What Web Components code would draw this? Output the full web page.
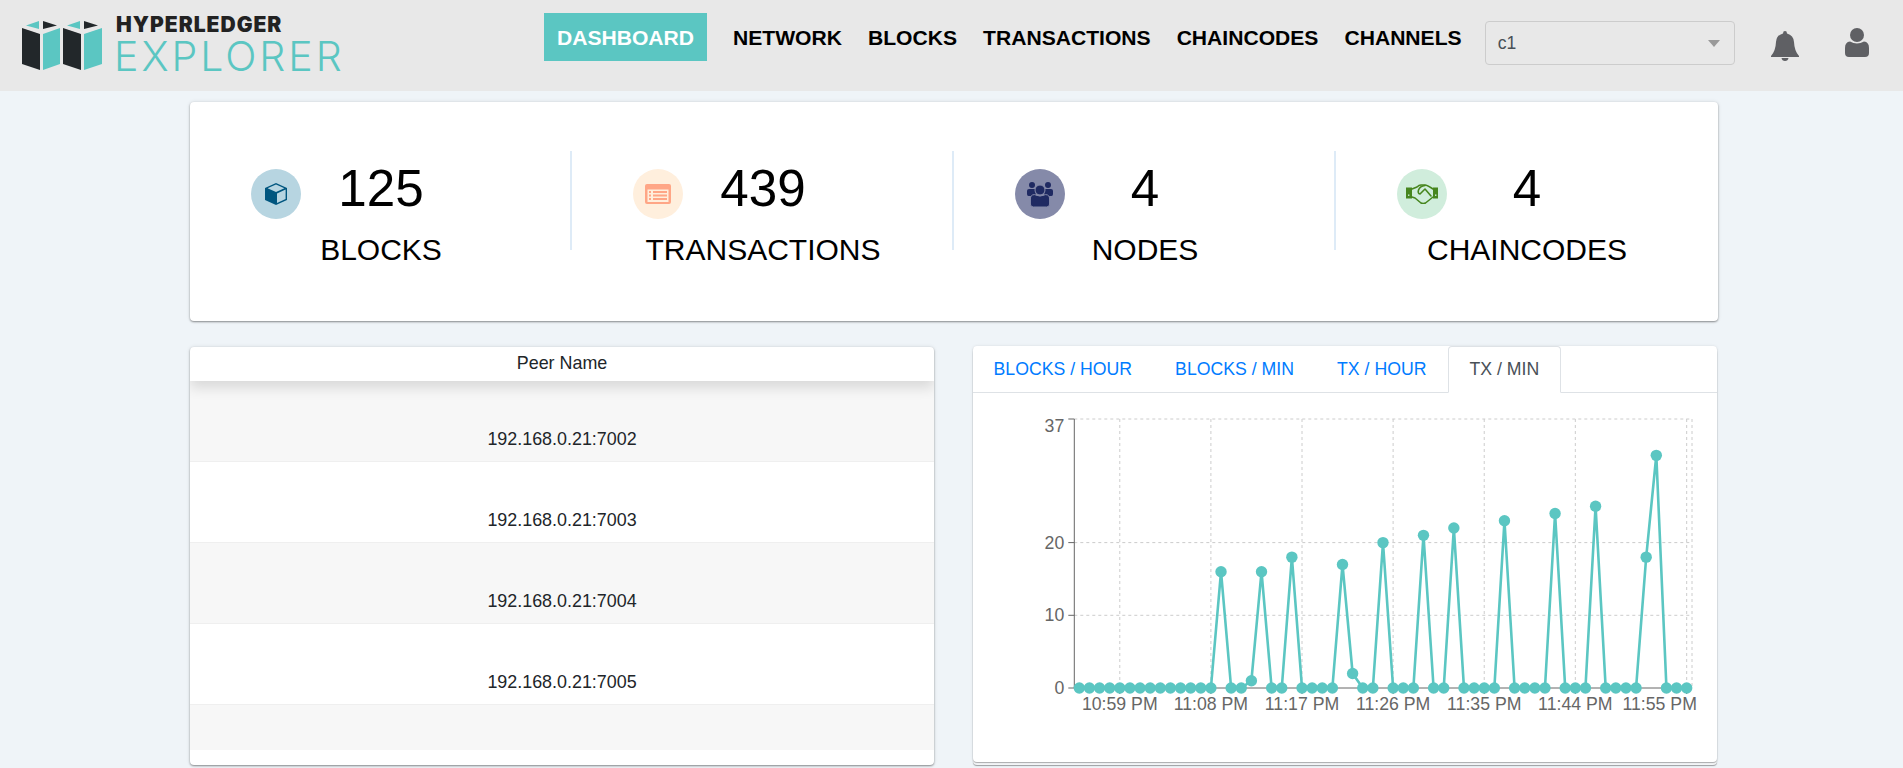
<!DOCTYPE html>
<html>
<head>
<meta charset="utf-8">
<title>Hyperledger Explorer</title>
<style>
  html, body { margin: 0; padding: 0; background: #eff4f8; height: 768px; overflow: hidden; }
  body { font-family: "Liberation Sans", Arial, sans-serif; color: #000; }
  main-page { display: block; }
</style>
</head>
<body>
<main-page></main-page>

<script>
const ICONS = {
  cube: `<svg width="24" height="24" viewBox="0 0 24 24"><path d="M12 1 L23 6 V18 L12 23 L1 18 V6 Z" fill="#00567f"/><path d="M13 11.5 L21.6 7.6 V17 L13 21 Z" fill="#b7d5e1"/><path d="M12 2.6 L20.4 6.3 L12 10 L3.6 6.3 Z" fill="#b7d5e1"/></svg>`,
  list: `<svg width="26" height="20" viewBox="0 0 26 20"><rect width="26" height="20" rx="2" fill="#ffa686"/><rect x="2.5" y="5.5" width="21" height="12.5" fill="#ffefdd"/><g fill="#ffa686"><rect x="4" y="7" width="2" height="2"/><rect x="4" y="10.5" width="2" height="2"/><rect x="4" y="14" width="2" height="2"/><rect x="8" y="7" width="14" height="2"/><rect x="8" y="10.5" width="14" height="2"/><rect x="8" y="14" width="14" height="2"/></g></svg>`,
  people: `<svg width="26" height="25" viewBox="0 0 26 25" fill="#1f2a62"><circle cx="5" cy="3" r="3"/><circle cx="21" cy="3" r="3"/><path d="M0 9 Q0 7 2 7 H8 L9 14 H1.5 Q0 14 0 12 Z"/><path d="M26 9 Q26 7 24 7 H18 L17 14 H24.5 Q26 14 26 12 Z"/><circle cx="13" cy="8" r="5" stroke="#858aa9" stroke-width="1"/><path d="M3.4 17 Q3.4 12.6 7.4 12.6 Q13 15.6 18.6 12.6 Q22.6 12.6 22.6 17 V22 Q22.6 25 19.6 25 H6.4 Q3.4 25 3.4 22 Z" stroke="#858aa9" stroke-width="1"/></svg>`,
  shake: `<svg width="32" height="20" viewBox="0 0 32 20" fill="none" stroke="#47861f" stroke-width="1.6" stroke-linejoin="round" stroke-linecap="round"><path d="M0 3.5 H6 V14.5 H0 Z M27 3.5 H32 V14.5 H27 Z" fill="#47861f" stroke="none"/><rect x="2" y="10.5" width="1.4" height="1.4" fill="#d0eddc" stroke="none"/><rect x="29" y="10.5" width="1.4" height="1.4" fill="#d0eddc" stroke="none"/><path d="M6 5 L11 3 Q13 1 15 1 H19 Q21 1 27 5"/><path d="M6 13 L9 14 L15 19 Q17 20 19.5 19 L27 13"/><path d="M19 1.5 Q14 2 12.5 6 Q11.5 9.5 14 10 L19 5 L25 12"/></svg>`
}

// plain table card on the left
class PeerTable extends HTMLElement {
  constructor() {
    super()
    const root = this.attachShadow({ mode: 'open' })
    const peers = ['192.168.0.21:7002', '192.168.0.21:7003', '192.168.0.21:7004', '192.168.0.21:7005']
    root.innerHTML = `
      <style>
        :host { display: flex; flex-direction: column; background: #fff; border-radius: 4px; height: 418px; width: 744px; margin-top: 1px; font-size: 17.9px; color: #212529;
          box-shadow: 0 1px 2px rgba(0,0,0,.4), 0 0 4px rgba(0,0,0,.1); overflow: hidden; }
        .head { height: 34px; flex: none; text-align: center; line-height: 32px; box-shadow: 0 7px 13px rgba(0,0,0,.12); position: relative; }
        .row { height: 81px; flex: none; box-sizing: border-box; text-align: center; border-bottom: 1px solid #efefef; padding-top: 46px; line-height: 24px; }
        .row:nth-of-type(even) { background: #f7f7f7; }
        .row.pad { height: 45px; border: 0; padding: 0; }
      </style>
      <div class="head">Peer Name</div>
      ${peers.map(p => `<div class="row">${p}</div>`).join('')}
      <div class="row pad"></div>
    `
  }
}
customElements.define('peer-table', PeerTable)

class StatTile extends HTMLElement {
  constructor() {
    super()
    this.attachShadow({ mode: 'open' }).innerHTML = `
      <style>
        :host { display: block; flex: 0 0 382px; min-width: 0; height: 99px; box-sizing: border-box; border-right: 2px solid #deebf7; }
        :host(:last-child) { border-right: 0; }
        .top { display: grid; grid-template-columns: 1fr auto 1fr; align-items: center; padding-top: 18px; width: 382px; }
        .circle { width: 50px; height: 50px; border-radius: 50%; margin-left: 61px; display: flex; align-items: center; justify-content: center; background: var(--c); }
        .num { font-size: 51.2px; line-height: 50px; margin-top: -10px; }
        .label { width: 382px; text-align: center; font-size: 30px; line-height: 34px; margin-top: 14px; }
      </style>
      <div class="top">
        <div class="circle"><slot name="icon"></slot></div>
        <div class="num"><slot name="num"></slot></div>
      </div>
      <div class="label"><slot></slot></div>
    `
  }
}
customElements.define('stat-tile', StatTile)

class StatCard extends HTMLElement {
  constructor() {
    super()
    this.attachShadow({ mode: 'open' }).innerHTML = `
      <style>
        :host { display: flex; background: #fff; border-radius: 4px; height: 219px; width: 1528px; box-sizing: border-box; padding-top: 49px;
          box-shadow: 0 1px 2px rgba(0,0,0,.4), 0 0 4px rgba(0,0,0,.1); }
      </style>
      <slot></slot>
    `
  }
}
customElements.define('stat-card', StatCard)

class TxChart extends HTMLElement {
  constructor() {
    super()
    const vals = {14:16,17:1,18:16,21:18,26:17,27:2,30:20,34:21,37:22,42:23,47:24,51:25,56:18,57:32}
    const X = i => 1079.3 + i * 10.123 - 973
    const Y = v => 688 - v * 7.27 - 393
    const pts = []
    for (let i = 0; i <= 60; i++) pts.push([X(i), Y(vals[i] || 0)])
    const vgrid = [4, 13, 22, 31, 40, 49, 60].map(X)
    const labels = [[4,'10:59 PM'],[13,'11:08 PM'],[22,'11:17 PM'],[31,'11:26 PM'],[40,'11:35 PM'],[49,'11:44 PM']]
    const L = 101.3, R = 719, T = Y(37), B = Y(0)
    let g = ''
    vgrid.forEach(x => { g += `<line x1="${x}" y1="${T}" x2="${x}" y2="${B}"/>` })
    g += `<line x1="${R}" y1="${T}" x2="${R}" y2="${B}"/>`
    ;[37, 20, 10].forEach(v => { g += `<line x1="${L}" y1="${Y(v)}" x2="${R}" y2="${Y(v)}"/>` })
    let yt = ''
    ;[[37, 8], [20, 1], [10, 1], [0, 1]].forEach(([v, d]) => {
      yt += `<line x1="${L-6}" y1="${Y(v)}" x2="${L}" y2="${Y(v)}" stroke="#666"/><text x="${L-10}" y="${Y(v)+d+5}" text-anchor="end">${v}</text>`
    })
    let xt = ''
    labels.forEach(([i, t]) => {
      xt += `<line x1="${X(i)}" y1="${B}" x2="${X(i)}" y2="${B+6}" stroke="#666"/><text x="${X(i)}" y="${B+22}" text-anchor="middle">${t}</text>`
    })
    xt += `<line x1="${X(60)}" y1="${B}" x2="${X(60)}" y2="${B+6}" stroke="#666"/><text x="${X(60)-27}" y="${B+22}" text-anchor="middle">11:55 PM</text>`
    const tabs = ['BLOCKS / HOUR', 'BLOCKS / MIN', 'TX / HOUR', 'TX / MIN']
    this.attachShadow({ mode: 'open' }).innerHTML = `
      <style>
        :host { display: block; background: #fff; border-radius: 4px; height: 416px; width: 744px; font-size: 17.7px;
          box-shadow: 0 1px 1px rgba(0,0,0,.3), 0 3px 0 #f3f5f7, 0 4px 1px rgba(0,0,0,.35), 0 0 3px rgba(0,0,0,.1); }
        .tabs { display: flex; height: 47px; box-sizing: border-box; border-bottom: 1px solid #dee2e6; padding-left: 0; }
        .tab { padding: 0 20.5px; line-height: 45px; color: #007bff; border: 1px solid transparent; border-radius: 4px 4px 0 0; height: 47px; box-sizing: border-box; white-space: nowrap; }
        .tab:first-child { margin-left: -1px; }
        .tab.active { color: #495057; background: #fff; border-color: #dee2e6 #dee2e6 #fff; }
        svg { display: block; font-family: "Liberation Sans", Arial, sans-serif; font-size: 17.7px; }
        svg text { fill: #666; }
      </style>
      <div class="tabs">${tabs.map((t, i) => `<div class="tab${i === 3 ? ' active' : ''}">${t}</div>`).join('')}</div>
      <svg width="744" height="369" viewBox="0 0 744 369">
        <g stroke="#ccc" stroke-dasharray="3 3" stroke-width="1">${g}</g>
        <line x1="${L}" y1="${T}" x2="${L}" y2="${B}" stroke="#666"/>
        <line x1="${L}" y1="${B}" x2="${R}" y2="${B}" stroke="#666"/>
        ${yt}${xt}
        <polyline fill="none" stroke="#5bc6c2" stroke-width="2.6" points="${pts.map(p => p.join(',')).join(' ')}"/>
        <g fill="#5bc6c2">${pts.map(p => `<circle cx="${p[0]}" cy="${p[1]}" r="5.7"/>`).join('')}</g>
      </svg>
    `
  }
}
customElements.define('tx-chart', TxChart)

class TopBar extends HTMLElement {
  constructor() {
    super()
    const links = ['NETWORK', 'BLOCKS', 'TRANSACTIONS', 'CHAINCODES', 'CHANNELS']
    this.attachShadow({ mode: 'open' }).innerHTML = `
      <style>
        :host { display: flex; align-items: flex-start; height: 91px; background: #e8e8e8; }
        .logo { display: flex; width: 544px; flex: none; padding-left: 22px; box-sizing: border-box; }
        .mark { margin-top: 20px; flex: none; }
        .word { margin-left: 14px; display: flex; flex-direction: column; }
        .hl { font-family: Inter, sans-serif; font-weight: 900; font-size: 21px; line-height: 20px; margin-top: 15px; color: #222; letter-spacing: 1px; }
        .ex { font-family: Inter, sans-serif; font-weight: 350; font-size: 41px; line-height: 36px; margin: 3px 0 0 -2px; color: #5bc6c2; letter-spacing: 3px; }
        nav { display: flex; align-items: center; margin-top: 13px; height: 48px; font-weight: 700; font-size: 21.1px; }
        .btn { background: #5bc6c2; color: #fff; height: 48px; line-height: 50px; box-sizing: border-box; width: 163px; text-align: center; white-space: nowrap; }
        .lnk { margin: 2px 0 0 26px; white-space: nowrap; line-height: 50px; }
        .sel { margin: 21px 0 0 23px; width: 250px; height: 44px; box-sizing: border-box; border: 1px solid #ccc; border-radius: 4px; display: flex; align-items: center; padding: 0 12px; font-size: 17.6px; color: #495057; }
        .sel span { flex: 1; }
        .arrow { width: 0; height: 0; border: 6px solid transparent; border-top: 7px solid #999; border-bottom: 0; margin-right: 2px; }
        .bell { margin: 31px 0 0 36px; flex: none; }
        .user { margin: 28px 0 0 46px; flex: none; }
      </style>
      <div class="logo">
        <svg class="mark" width="80" height="50" viewBox="0 0 80 50">
          <path d="M0 8 L18 14 V50 L0 44 Z M41 8 L59 14 V50 L41 44 Z" fill="#22272a"/>
          <path d="M21 14 L38 8 V44 L21 50 Z M62 14 L80 8 V44 L62 50 Z" fill="#5bc6c2"/>
          <path d="M4 5.5 L17 1 V9 Z M45 5.5 L58 1 V9 Z" fill="#5bc6c2"/>
          <path d="M21 1 L35 5.5 L21 9 Z M62 1 L76 5.5 L62 9 Z" fill="#22272a"/>
        </svg>
        <div class="word"><span class="hl">HYPERLEDGER</span><span class="ex">EXPLORER</span></div>
      </div>
      <nav><div class="btn">DASHBOARD</div>${links.map(l => `<div class="lnk">${l}</div>`).join('')}</nav>
      <div class="sel"><span>c1</span><i class="arrow"></i></div>
      <svg class="bell" width="28" height="30" viewBox="0 0 28 30" fill="#5f6064"><path d="M14 0 Q16 0 16 2.4 Q22.5 4 23 11 Q23.4 20 28 25 V26 H0 V25 Q4.6 20 5 11 Q5.5 4 12 2.4 Q12 0 14 0 Z"/><path d="M10.5 27 H17.5 Q17 30 14 30 Q11 30 10.5 27 Z"/></svg>
      <svg class="user" width="24" height="29" viewBox="0 0 24 29" fill="#5f6064"><circle cx="12" cy="7" r="7"/><path d="M0 20 Q0 14 5 13.5 Q12 17.5 19 13.5 Q24 14 24 20 V25 Q24 29 20 29 H4 Q0 29 0 25 Z"/></svg>
    `
  }
}
customElements.define('top-bar', TopBar)

class MainPage extends HTMLElement {
  constructor() {
    super()
    this.attachShadow({ mode: 'open' }).innerHTML = `
      <style>
        :host { display: block; }
        .wrap { width: 1528px; margin: 11px 0 0 190px; }
        .row { display: flex; gap: 39px; margin-top: 25px; align-items: flex-start; }
      </style>
      <top-bar></top-bar>
      <div class="wrap">
        <stat-card>
          <stat-tile><span slot="icon" style="display:flex">${ICONS.cube}</span><span slot="num">125</span>BLOCKS</stat-tile>
          <stat-tile><span slot="icon" style="display:flex">${ICONS.list}</span><span slot="num">439</span>TRANSACTIONS</stat-tile>
          <stat-tile><span slot="icon" style="display:flex">${ICONS.people}</span><span slot="num">4</span>NODES</stat-tile>
          <stat-tile><span slot="icon" style="display:flex">${ICONS.shake}</span><span slot="num">4</span>CHAINCODES</stat-tile>
        </stat-card>
        <div class="row">
          <peer-table></peer-table>
          <tx-chart></tx-chart>
        </div>
      </div>
    `
    const tiles = this.shadowRoot.querySelectorAll('stat-tile')
    ;['#b7d5e1', '#ffefdd', '#858aa9', '#d0eddc'].forEach((c, i) => tiles[i].style.setProperty('--c', c))
  }
}
customElements.define('main-page', MainPage)
</script>
</body>
</html>
